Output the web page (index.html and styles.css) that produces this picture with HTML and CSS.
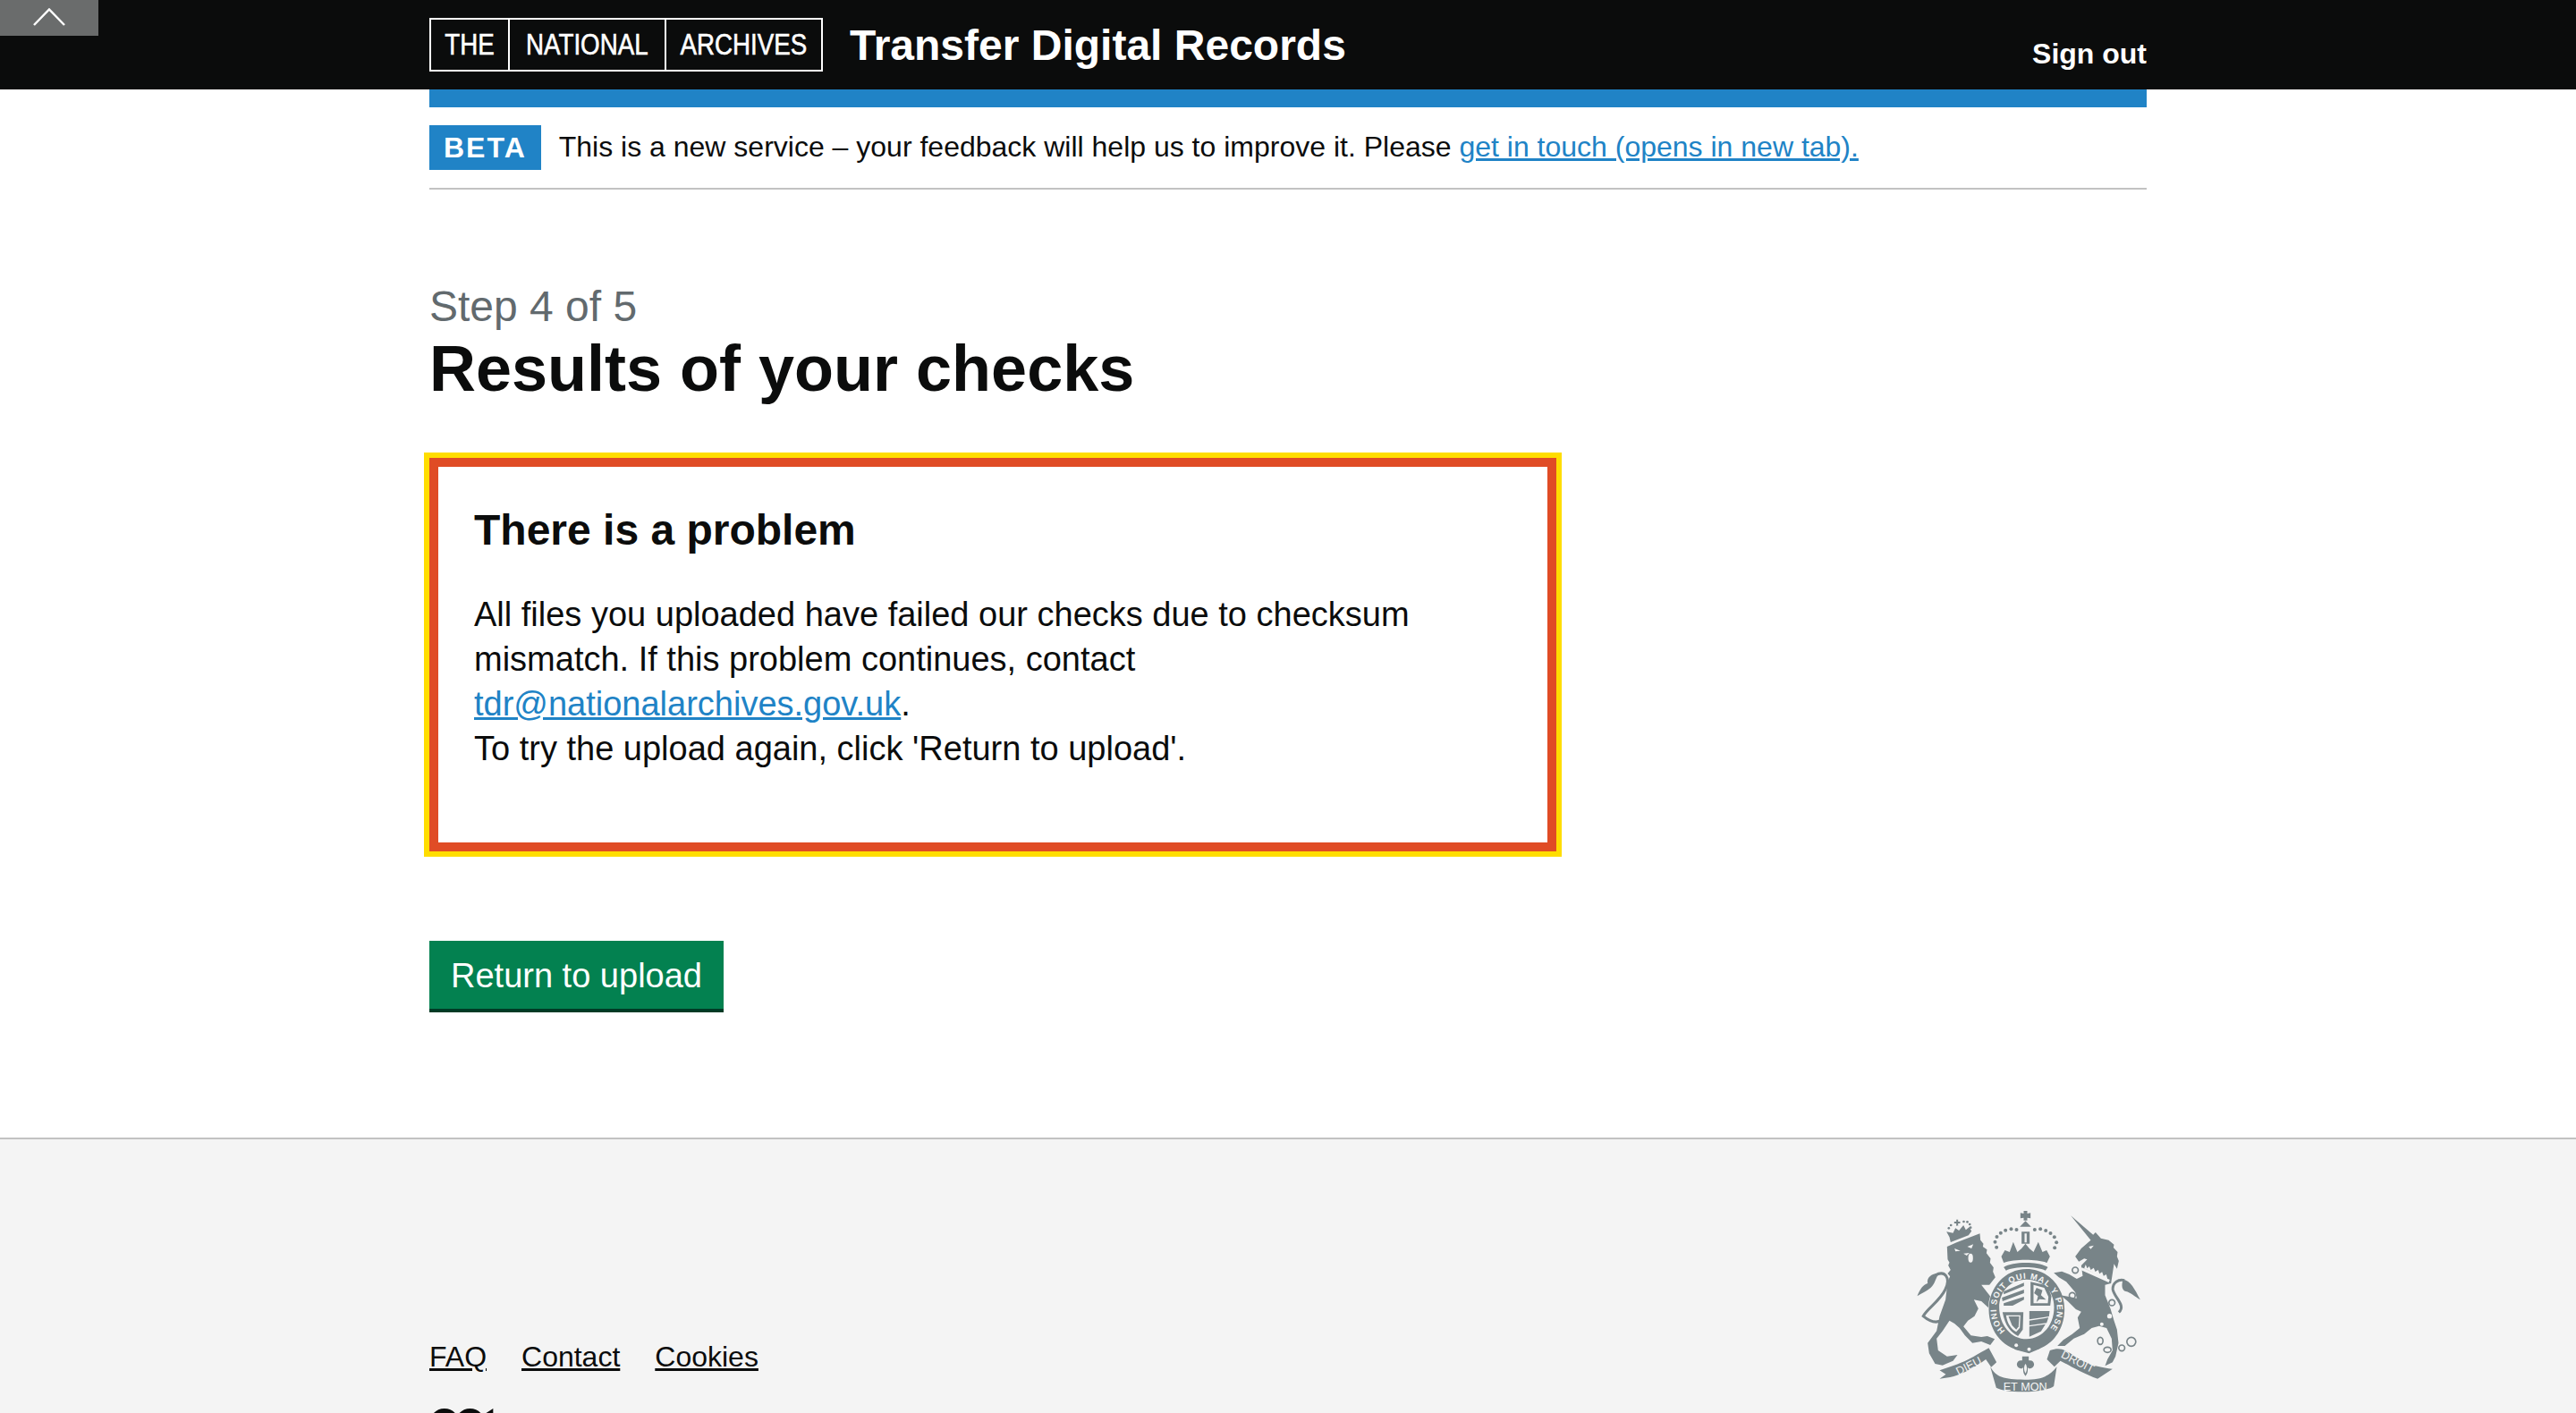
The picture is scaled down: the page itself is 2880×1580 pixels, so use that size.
FILE: index.html
```html
<!DOCTYPE html>
<html lang="en">
<head>
<meta charset="utf-8">
<title>Results of your checks</title>
<link rel="stylesheet" href="styles.css">
</head>
<body>
<a class="toggle" href="#" aria-label="Toggle"><svg width="110" height="40" viewBox="0 0 110 40"><path d="M38 28 L55 10.500 L72 28" fill="none" stroke="#fff" stroke-width="2.500"/></svg></a>
<header class="header">
  <div class="wrap header-row">
    <div class="brand">
      <div class="logo"><span class="logo-cell logo-cell-s"><span class="logo-word">THE</span></span><span class="logo-cell"><span class="logo-word">NATIONAL</span></span><span class="logo-cell"><span class="logo-word">ARCHIVES</span></span></div>
      <a class="service" href="#">Transfer Digital Records</a>
    </div>
    <a class="signout" href="#">Sign out</a>
  </div>
</header>
<div class="wrap">
  <div class="blue-bar"></div>
  <div class="phase">
    <strong class="tag">BETA</strong>
    <span class="phase-text">This is a new service – your feedback will help us to improve it. Please <a class="link" href="#">get in touch (opens in new tab).</a></span>
  </div>
  <main class="main">
    <span class="caption">Step 4 of 5</span>
    <h1 class="title">Results of your checks</h1>
    <div class="error-box">
      <h2 class="error-title">There is a problem</h2>
      <p class="error-body">All files you uploaded have failed our checks due to checksum mismatch. If this problem continues, contact <a class="link" href="#">tdr@nationalarchives.gov.uk</a>.<br>To try the upload again, click 'Return to upload'.</p>
    </div>
    <a class="button" href="#">Return to upload</a>
  </main>
</div>
<footer class="footer">
  <div class="wrap footer-row">
    <div class="footer-left">
      <nav class="footer-nav"><a href="#">FAQ</a><a href="#">Contact</a><a href="#">Cookies</a></nav>
      <svg class="ogl" width="82" height="33" viewBox="0 0 483.2 195.7" aria-label="Open Government Licence"><path fill="#0b0c0c" d="M421.5 142.8V.1l-50.7 32.3v161.1h112.4v-50.7zm-122.3-9.6A47.12 47.12 0 0 1 221 97.8c0-26 21.1-47.1 47.1-47.1 16.7 0 31.4 8.7 39.7 21.8l42.7-27.2A97.63 97.63 0 0 0 268.1 0c-36.5 0-68.3 20.1-85.1 49.7A98 98 0 0 0 97.8 0C43.900 0 0 43.900 0 97.800s43.900 97.800 97.800 97.800c36.500 0 68.300-20.100 85.100-49.700a97.760 97.760 0 0 0 149.600 25.400l19.400 22.200h3v-87.800h-80l24.300 27.500zM97.800 145c-26 0-47.100-21.100-47.100-47.100s21.100-47.100 47.100-47.100 47.200 21 47.200 47S123.800 145 97.800 145"/></svg>
    </div>
    <svg class="crest" width="257" height="210" viewBox="120 90 770 630" aria-label="Royal coat of arms">
      <g class="ink">
        <path class="line" d="M190 318C222 300 244 325 224 366 205 405 165 428 150 455 170 472 195 482 218 466"/>
        <path d="M130 388C140 362 150 350 165 345 160 325 180 310 205 312 190 325 192 345 175 360 160 372 145 378 130 388Z"/>
        <path d="M230 222 262 208 340 178 342 200 352 212 350 222 364 232 362 244 376 262 374 276 386 292 384 306 392 325 372 350 345 350 372 385 395 420 402 455 385 452 372 430 345 405 320 400 335 430 322 455 300 470 285 490 310 520 345 525 365 522 390 532 375 552 345 540 315 545 290 520 272 495 255 480 238 470 215 505 195 530 200 570 230 590 265 585 250 605 215 620 190 615 170 580 165 545 195 505 205 455 225 400 232 340 240 322 232 312 242 300 234 285 238 275 232 265Z"/>
        <path d="M242 207 238 190 228 172 250 176 258 160 270 168 285 150 293 166 305 156 312 170 302 184Z"/>
        <path d="M256 152h5v-8h-7v-6h7v-7h6v7h7v6h-7v7h5z"/>
        <circle cx="236" cy="160" r="4"/><circle cx="243" cy="150" r="4"/><circle cx="286" cy="138" r="4"/><circle cx="298" cy="139" r="4"/><circle cx="306" cy="147" r="4"/><circle cx="309" cy="158" r="4"/>
        <path d="M487 102h12v9l11-2v18l-11-2v9h-12v-9l-11 2v-18l11 2zM474 155 493 136 512 155Z"/>
        <path fill-rule="evenodd" d="M480 172h27v40h-27zM490 178v30h7v-30z"/>
        <path d="M412 255 424 234 440 240 452 206 466 240 480 228 493 212 506 228 520 240 536 206 550 240 564 234 575 255 565 276C530 263 456 263 420 276Z"/>
        <path d="M420 291C450 271 538 271 568 291L560 302C530 287 456 287 428 302Z"/>
        <circle cx="396" cy="224" r="6"/><circle cx="391" cy="206" r="6"/><circle cx="397" cy="189" r="6"/><circle cx="410" cy="176" r="6"/><circle cx="426" cy="167" r="6"/><circle cx="445" cy="163" r="6"/><circle cx="463" cy="165" r="6"/><circle cx="524" cy="165" r="6"/><circle cx="543" cy="163" r="6"/><circle cx="561" cy="168" r="6"/><circle cx="577" cy="177" r="6"/><circle cx="590" cy="190" r="6"/><circle cx="597" cy="208" r="6"/><circle cx="591" cy="226" r="6"/>
        <path class="garter" fill-rule="evenodd" d="M497 297C570 297 624 360 624 432 624 510 570 572 497 572 424 572 370 510 370 432 370 360 424 297 497 297ZM497 332C440 332 405 375 405 425 405 485 445 532 497 532 549 532 589 485 589 425 589 375 554 332 497 332Z"/>
        <path d="M430 530 455 540 500 550 555 528 572 536 540 565 505 580 460 568 432 550Z"/>
        <path d="M420 372 488 343V354L420 382ZM414 393 488 366V378L416 405ZM420 412 488 390V400L450 420H420Z"/>
        <path d="M510 340 566 352 580 388 576 420H510ZM520 350V412H568L570 390 556 360Z"/>
        <path d="M530 360 550 368 545 385 562 400 540 398 530 408 535 388 522 378Z"/>
        <path fill-rule="evenodd" d="M416 442H486L484 500 468 522C445 510 425 490 416 442ZM428 452C432 480 445 498 462 508L474 494 476 452Z"/>
        <path d="M436 456 472 456 470 490 462 500 448 486Z"/>
        <path d="M506 438H574L572 456 506 466ZM506 470 570 460 564 478 506 486ZM506 490 560 482 545 506 506 524Z"/>
        <path d="M645 118 720 182 728 174 746 194 772 200 790 215 788 225 802 240 800 255 806 270 800 296 790 280 780 345 760 350 760 385 778 430 790 470 800 500 805 545 795 590 785 610 760 622 768 600 785 570 782 530 765 495 740 488 715 495 690 515 655 530 625 555 600 555 620 535 650 515 675 495 668 460 680 440 662 432 635 405 610 385 640 390 665 395 660 375 630 340 605 325 588 310 615 305 640 315 665 330 685 320 680 285 700 265 690 262 672 272 660 255 680 228 712 200Z"/>
        <path class="line" d="M806 442C832 420 790 392 786 365 785 342 805 330 825 335"/>
        <path d="M820 332C845 335 860 365 878 400 860 390 845 375 830 372 815 368 815 350 820 332Z"/>
        <path d="M205 637 260 618C300 605 340 578 370 562L396 610 378 626 360 600C330 622 280 652 240 660L205 665 226 650Z"/>
        <path d="M375 625C395 660 420 668 490 668 550 668 575 655 598 625L588 690C560 712 430 716 395 695Z"/>
        <path d="M575 570C610 558 622 566 660 590 690 610 725 626 785 632L735 665C690 650 640 620 610 605L590 625 565 600Z"/>
        <path d="M482 590h22v14c16-4 24 14 12 24-8 6-14 2-16-2 2 12 0 22-7 30-7-8-9-18-7-30-2 4-8 8-16 2-12-10-4-28 12-24z"/>
      </g>
      <g class="paper">
        <ellipse cx="309" cy="260" rx="8" ry="15"/>
        <path d="M255 228 275 236 258 238ZM298 222 318 214 312 228ZM285 245 305 243 296 252Z"/>
        <path d="M705 222 722 218 712 230Z"/>
        <path d="M682 292 776 333 772 342 678 300ZM695 282 700 295 707 288 712 300 722 293 727 306 737 300 741 313 750 307 755 320 764 315 768 330 690 295Z"/>
        <circle cx="775" cy="455" r="8"/><circle cx="749" cy="482" r="6"/><circle cx="462" cy="553" r="6"/><circle cx="505" cy="566" r="6"/>
        <path d="M493 615c6 8 6 22 0 32-6-10-6-24 0-32z"/>
      </g>
      <g class="ring">
        <circle cx="660" cy="301" r="10"/><circle cx="650" cy="386" r="10"/><circle cx="783" cy="410" r="10"/><ellipse cx="744" cy="538" rx="9" ry="12"/><ellipse cx="768" cy="568" rx="12" ry="9"/><circle cx="816" cy="562" r="10"/><circle cx="848" cy="541" r="15"/>
      </g>
      <defs><path id="garter-arc" d="M425 504A102 102 0 1 1 569 504"/></defs>
      <text class="crest-text crest-garter"><textPath href="#garter-arc" textLength="470">HONI SOIT QUI MAL Y PENSE</textPath></text>
      <text class="crest-text" x="492" y="704" text-anchor="middle">ET MON</text>
      <text class="crest-text" x="268" y="654" transform="rotate(-27 268 654)">DIEU</text>
      <text class="crest-text" x="610" y="592" transform="rotate(27 610 592)">DROIT</text>
    </svg>
  </div>
</footer>
</body>
</html>
```
FILE: styles.css
```css
* { box-sizing: border-box; }
html, body { margin: 0; padding: 0; }
body { height: 1580px; overflow: hidden; background: #fff; color: #0b0c0c; font-family: "Liberation Sans", Arial, sans-serif; position: relative; }
a { color: inherit; }
.wrap { width: 1920px; margin: 0 auto; }
.toggle { position: absolute; top: 0; left: 0; width: 110px; height: 40px; background: #6a6c6c; display: block; }
.toggle svg { display: block; }
.header { height: 100px; background: #0b0c0c; color: #fff; }
.header-row { display: flex; justify-content: space-between; height: 100%; }
.brand { display: flex; align-items: flex-start; padding-top: 20px; }
.logo { display: flex; height: 60px; border: 2px solid #fff; font-size: 33px; }
.logo-cell { display: flex; align-items: center; justify-content: center; width: 175px; border-left: 2px solid #fff; }
.logo-cell-s { width: 86px; border-left: 0; }
.logo-word { display: inline-block; transform: scaleX(.84); -webkit-text-stroke: .6px #fff; }
.service { color: #fff; text-decoration: none; font-weight: 700; font-size: 48px; line-height: 60px; margin-left: 30px; margin-top: 1px; }
.signout { color: #fff; text-decoration: none; font-weight: 700; font-size: 32px; line-height: 40px; margin-top: 40px; }
.blue-bar { height: 20px; background: #2083c6; }
.phase { display: flex; align-items: flex-start; height: 92px; padding-top: 20px; border-bottom: 2px solid #c2c2c2; }
.tag { background: #2083c6; color: #fff; font-size: 32px; line-height: 50px; height: 50px; padding: 0 16px; letter-spacing: 2px; }
.phase-text { font-size: 32px; line-height: 49px; margin-left: 20px; }
.link { color: #2083c6; }
.main { padding-top: 103px; }
.caption { display: block; color: #626a6e; font-size: 48px; line-height: 56px; }
.title { margin: 0; font-size: 72px; line-height: 83px; font-weight: 700; }
.error-box { width: 1260px; margin-top: 58px; padding: 40px; border: 10px solid #e04c25; outline: 6px solid #ffdd00; }
.error-title { margin: 1px 0 39px; font-size: 48px; line-height: 60px; font-weight: 700; }
.error-body { margin: 0 0 40px; font-size: 38px; line-height: 50px; }
.button { display: inline-block; margin-top: 100px; padding: 14px 24px 12px; background: #038150; color: #fff; text-decoration: none; font-size: 38px; line-height: 50px; box-shadow: 0 4px 0 #003b25; }
.footer { margin-top: 144px; height: 308px; background: #f4f4f4; border-top: 2px solid #c2c2c2; overflow: hidden; }
.footer-row { display: flex; justify-content: space-between; align-items: flex-start; }
.footer-left { padding-top: 223px; }
.footer-nav { display: flex; gap: 39px; font-size: 32px; line-height: 40px; }
.ogl { display: block; margin-top: 38px; }
.crest { margin-top: 76px; margin-right: 3px; flex: none; }
.ink { fill: #788488; }
.line { fill: none; stroke: #788488; stroke-width: 9; }
.garter { stroke: #f4f4f4; stroke-width: 4; paint-order: stroke; }
.paper { fill: #f4f4f4; }
.ring { fill: none; stroke: #788488; stroke-width: 5; }
.crest-text { font-family: "Liberation Sans", sans-serif; font-size: 38px; fill: #f4f4f4; }
.crest-garter { font-size: 28px; font-weight: 700; }
```
